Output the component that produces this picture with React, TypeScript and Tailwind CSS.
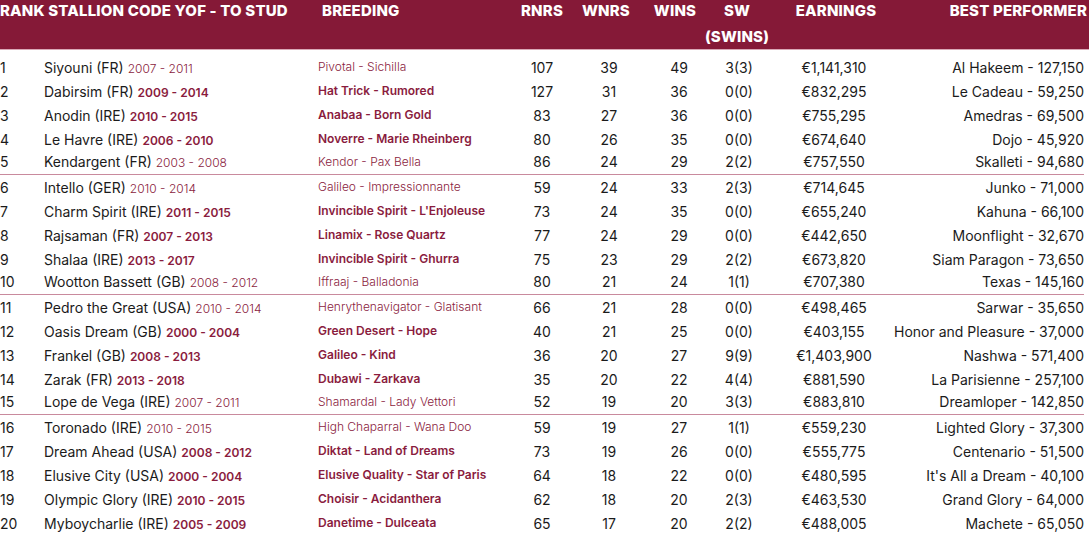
type Row = {
  rank: number;
  name: string;
  years: string;
  breeding: string;
  rnrs: number;
  wnrs: number;
  wins: number;
  sw: string;
  earnings: string;
  best: string;
  bold: boolean;
  line?: boolean;
};

const rows: Row[] = [
  { rank: 1, name: "Siyouni (FR)", years: "2007 - 2011", breeding: "Pivotal - Sichilla", rnrs: 107, wnrs: 39, wins: 49, sw: "3(3)", earnings: "€1,141,310", best: "Al Hakeem - 127,150", bold: false },
  { rank: 2, name: "Dabirsim (FR)", years: "2009 - 2014", breeding: "Hat Trick - Rumored", rnrs: 127, wnrs: 31, wins: 36, sw: "0(0)", earnings: "€832,295", best: "Le Cadeau - 59,250", bold: true },
  { rank: 3, name: "Anodin (IRE)", years: "2010 - 2015", breeding: "Anabaa - Born Gold", rnrs: 83, wnrs: 27, wins: 36, sw: "0(0)", earnings: "€755,295", best: "Amedras - 69,500", bold: true },
  { rank: 4, name: "Le Havre (IRE)", years: "2006 - 2010", breeding: "Noverre - Marie Rheinberg", rnrs: 80, wnrs: 26, wins: 35, sw: "0(0)", earnings: "€674,640", best: "Dojo - 45,920", bold: true },
  { rank: 5, name: "Kendargent (FR)", years: "2003 - 2008", breeding: "Kendor - Pax Bella", rnrs: 86, wnrs: 24, wins: 29, sw: "2(2)", earnings: "€757,550", best: "Skalleti - 94,680", bold: false, line: true },
  { rank: 6, name: "Intello (GER)", years: "2010 - 2014", breeding: "Galileo - Impressionnante", rnrs: 59, wnrs: 24, wins: 33, sw: "2(3)", earnings: "€714,645", best: "Junko - 71,000", bold: false },
  { rank: 7, name: "Charm Spirit (IRE)", years: "2011 - 2015", breeding: "Invincible Spirit - L'Enjoleuse", rnrs: 73, wnrs: 24, wins: 35, sw: "0(0)", earnings: "€655,240", best: "Kahuna - 66,100", bold: true },
  { rank: 8, name: "Rajsaman (FR)", years: "2007 - 2013", breeding: "Linamix - Rose Quartz", rnrs: 77, wnrs: 24, wins: 29, sw: "0(0)", earnings: "€442,650", best: "Moonflight - 32,670", bold: true },
  { rank: 9, name: "Shalaa (IRE)", years: "2013 - 2017", breeding: "Invincible Spirit - Ghurra", rnrs: 75, wnrs: 23, wins: 29, sw: "2(2)", earnings: "€673,820", best: "Siam Paragon - 73,650", bold: true },
  { rank: 10, name: "Wootton Bassett (GB)", years: "2008 - 2012", breeding: "Iffraaj - Balladonia", rnrs: 80, wnrs: 21, wins: 24, sw: "1(1)", earnings: "€707,380", best: "Texas - 145,160", bold: false, line: true },
  { rank: 11, name: "Pedro the Great (USA)", years: "2010 - 2014", breeding: "Henrythenavigator - Glatisant", rnrs: 66, wnrs: 21, wins: 28, sw: "0(0)", earnings: "€498,465", best: "Sarwar - 35,650", bold: false },
  { rank: 12, name: "Oasis Dream (GB)", years: "2000 - 2004", breeding: "Green Desert - Hope", rnrs: 40, wnrs: 21, wins: 25, sw: "0(0)", earnings: "€403,155", best: "Honor and Pleasure - 37,000", bold: true },
  { rank: 13, name: "Frankel (GB)", years: "2008 - 2013", breeding: "Galileo - Kind", rnrs: 36, wnrs: 20, wins: 27, sw: "9(9)", earnings: "€1,403,900", best: "Nashwa - 571,400", bold: true },
  { rank: 14, name: "Zarak (FR)", years: "2013 - 2018", breeding: "Dubawi - Zarkava", rnrs: 35, wnrs: 20, wins: 22, sw: "4(4)", earnings: "€881,590", best: "La Parisienne - 257,100", bold: true },
  { rank: 15, name: "Lope de Vega (IRE)", years: "2007 - 2011", breeding: "Shamardal - Lady Vettori", rnrs: 52, wnrs: 19, wins: 20, sw: "3(3)", earnings: "€883,810", best: "Dreamloper - 142,850", bold: false, line: true },
  { rank: 16, name: "Toronado (IRE)", years: "2010 - 2015", breeding: "High Chaparral - Wana Doo", rnrs: 59, wnrs: 19, wins: 27, sw: "1(1)", earnings: "€559,230", best: "Lighted Glory - 37,300", bold: false },
  { rank: 17, name: "Dream Ahead (USA)", years: "2008 - 2012", breeding: "Diktat - Land of Dreams", rnrs: 73, wnrs: 19, wins: 26, sw: "0(0)", earnings: "€555,775", best: "Centenario - 51,500", bold: true },
  { rank: 18, name: "Elusive City (USA)", years: "2000 - 2004", breeding: "Elusive Quality - Star of Paris", rnrs: 64, wnrs: 18, wins: 22, sw: "0(0)", earnings: "€480,595", best: "It's All a Dream - 40,100", bold: true },
  { rank: 19, name: "Olympic Glory (IRE)", years: "2010 - 2015", breeding: "Choisir - Acidanthera", rnrs: 62, wnrs: 18, wins: 20, sw: "2(3)", earnings: "€463,530", best: "Grand Glory - 64,000", bold: true },
  { rank: 20, name: "Myboycharlie (IRE)", years: "2005 - 2009", breeding: "Danetime - Dulceata", rnrs: 65, wnrs: 17, wins: 20, sw: "2(2)", earnings: "€488,005", best: "Machete - 65,050", bold: true },
];

// fixed column widths, measured off the reference
const cols = "grid grid-cols-[44px_274px_194px_60px_74px_66px_54px_136px_182px]";

export default function App() {
  return (
    <div className="w-[1089px] h-[552px] bg-white text-[#1b1b1b] font-['Inter','Liberation_Sans',sans-serif] overflow-hidden">
      {/* header band */}
      <div className={`${cols} h-[50px] bg-[#851937] text-white font-extrabold text-[15px] uppercase leading-[26px] tracking-[0.012em] border-b border-[#d9a8b6]`}>
        <div className="col-span-2 whitespace-nowrap -mt-[2px]">Rank Stallion Code YOF - To Stud</div>
        <div className="pl-[4px] -mt-[2px]">Breeding</div>
        <div className="text-center -mt-[2px]">RNRS</div>
        <div className="text-center pr-[6px] -mt-[2px]">WNRS</div>
        <div className="text-center pr-[8px] -mt-[2px]">WINS</div>
        <div className="flex flex-col items-center whitespace-nowrap pr-[4px] -mt-[2px]">
          <span>SW</span>
          <span>(SWINS)</span>
        </div>
        <div className="text-center pl-[4px] -mt-[2px]">Earnings</div>
        <div className="flex justify-end whitespace-nowrap -mt-[2px] -mr-[3px]">Best Performer</div>
      </div>

      <div className="pt-[5px] pr-[5px]">
        {rows.map((r) => (
          <div
            key={r.rank}
            className={`${cols} h-[24px] items-center text-[14px] whitespace-nowrap ${r.line ? "border-b border-[#c98a9d] pb-[2px]" : ""}`}
          >
            <div>{r.rank}</div>
            <div>
              {r.name}{" "}
              <span className={`text-[12px] text-[#8a1c3e] ${r.bold ? "font-semibold" : "font-light"}`}>{r.years}</span>
            </div>
            <div className={`text-[12px] text-[#8a1c3e] ${r.bold ? "font-semibold" : "font-light"}`}>{r.breeding}</div>
            <div className="text-center">{r.rnrs}</div>
            <div className="text-center">{r.wnrs}</div>
            <div className="text-center">{r.wins}</div>
            <div className="text-center">{r.sw}</div>
            <div className="text-center">{r.earnings}</div>
            <div className="flex justify-end">{r.best}</div>
          </div>
        ))}
      </div>
    </div>
  );
}
